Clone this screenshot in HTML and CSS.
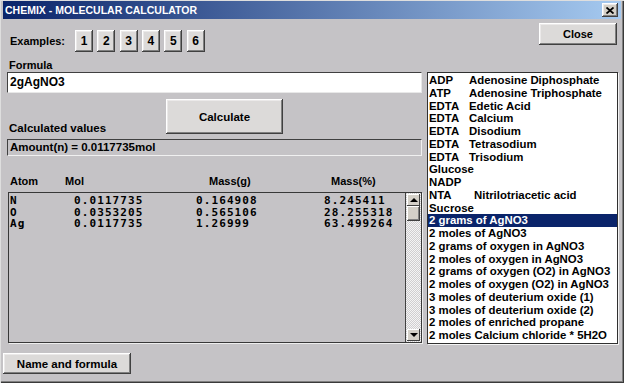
FILE: index.html
```html
<!DOCTYPE html>
<html lang="en">
<head>
  <meta charset="UTF-8" />
  <title>CHEMIX - Molecular Calculator</title>
  <link rel="stylesheet" href="styles.css">
</head>
<body>
  <div class="window">
    <div class="titlebar">
      <span class="title">CHEMIX - MOLECULAR CALCULATOR</span>
      <button class="btn title-close">
        <svg width="8" height="7" viewBox="0 0 8 7"><path d="M0.5 0.5 L7.5 6.5 M7.5 0.5 L0.5 6.5" stroke="#000" stroke-width="1.8" fill="none"/></svg>
      </button>
    </div>

    <div class="top">
      <div class="examples">
        <span>Examples:</span>
        <div class="ex-btns">
          <button class="btn ex-btn">1</button>
          <button class="btn ex-btn">2</button>
          <button class="btn ex-btn">3</button>
          <button class="btn ex-btn">4</button>
          <button class="btn ex-btn">5</button>
          <button class="btn ex-btn">6</button>
        </div>
      </div>
      <button class="btn close-btn">Close</button>
    </div>

    <div class="main">
      <!-- calculator side -->
      <div class="left">
        <div class="label">Formula</div>
        <div class="input">2gAgNO3</div>
        <div class="calc-row">
          <div class="label calc-label">Calculated values</div>
          <button class="btn calc-btn">Calculate</button>
        </div>
        <div class="amount">Amount(n) = 0.0117735mol</div>

        <div class="headers">
          <span>Atom</span>
          <span>Mol</span>
          <span>Mass(g)</span>
          <span>Mass(%)</span>
        </div>
        <div class="results">
          <div class="results-body">
            <div class="row"><span>N</span><span>0.0117735</span><span>0.164908</span><span>8.245411</span></div>
            <div class="row"><span>O</span><span>0.0353205</span><span>0.565106</span><span>28.255318</span></div>
            <div class="row"><span>Ag</span><span>0.0117735</span><span>1.26999</span><span>63.499264</span></div>
          </div>
          <div class="scrollbar">
            <div class="sb-btn"><span class="arrow-up"></span></div>
            <div class="sb-thumb"></div>
            <div class="sb-track"></div>
            <div class="sb-btn"><span class="arrow-down"></span></div>
          </div>
        </div>
      </div>

      <!-- examples list -->
      <ul class="list">
        <li><span class="code">ADP</span>Adenosine Diphosphate</li>
        <li><span class="code">ATP</span>Adenosine Triphosphate</li>
        <li><span class="code">EDTA</span>Edetic Acid</li>
        <li><span class="code">EDTA</span>Calcium</li>
        <li><span class="code">EDTA</span>Disodium</li>
        <li><span class="code">EDTA</span>Tetrasodium</li>
        <li><span class="code">EDTA</span>Trisodium</li>
        <li>Glucose</li>
        <li>NADP</li>
        <li><span class="code code-wide">NTA</span>Nitrilotriacetic acid</li>
        <li>Sucrose</li>
        <li class="selected">2 grams of AgNO3</li>
        <li>2 moles of AgNO3</li>
        <li>2 grams of oxygen in AgNO3</li>
        <li>2 moles of oxygen in AgNO3</li>
        <li>2 grams of oxygen (O2) in AgNO3</li>
        <li>2 moles of oxygen (O2) in AgNO3</li>
        <li>3 moles of deuterium oxide (1)</li>
        <li>3 moles of deuterium oxide (2)</li>
        <li>2 moles of enriched propane</li>
        <li>2 moles Calcium chloride * 5H2O</li>
      </ul>
    </div>

    <div class="footer">
      <button class="btn name-btn">Name and formula</button>
    </div>
  </div>
</body>
</html>
```

FILE: styles.css
```css
* {
  box-sizing: border-box;
}

body {
  margin: 0;
  background: #c5c3c6;
  color: #000;
  font-family: "Liberation Sans", Arial, sans-serif;
  font-weight: bold;
  font-size: 11px;
}

.window {
  width: 624px;
  height: 383px;
  padding: 1px 3px 3px;
  display: flex;
  flex-direction: column;
  background: #c5c3c6;
  box-shadow: inset 1px 1px #dedede, inset -1px -1px #3a3a3a, inset -2px -2px #808080;
}

.titlebar {
  height: 18px;
  display: flex;
  align-items: center;
  justify-content: space-between;
  padding: 0 3px 0 2px;
  background: linear-gradient(to right, #0a246a, #a6caf0);
}

.title {
  color: #fff;
  font-size: 10.5px;
}

.btn {
  font: inherit;
  color: inherit;
  padding: 0;
  border: 0;
  background: #dcdad9;
  box-shadow: inset -1px -1px #404040, inset 1px 1px #fff, inset -2px -2px #808080, inset 2px 2px #ebe9e9;
}

.title-close {
  width: 16px;
  height: 14px;
  display: flex;
  align-items: center;
  justify-content: center;
  background: #d4d0c8;
}

.top {
  height: 40px;
  display: flex;
  justify-content: space-between;
  align-items: flex-start;
  padding: 0 4px 0 7px;
}

.examples {
  display: flex;
  align-items: center;
  gap: 10px;
  margin-top: 11px;
}

.ex-btns {
  display: flex;
  gap: 4.3px;
}

.ex-btn {
  width: 18px;
  height: 22px;
  font-size: 12px;
}

.close-btn {
  width: 78px;
  height: 22px;
  margin-top: 4px;
}

.main {
  display: grid;
  grid-template-columns: 415px 191px;
  column-gap: 5px;
  align-items: start;
  padding-left: 4px;
}

.label {
  line-height: 13px;
  padding-left: 2px;
}

.input {
  height: 21px;
  padding-left: 2px;
  line-height: 19px;
  font-size: 12px;
  background: #fff;
  border: 1px solid;
  border-color: #404040 #e8e8e8 #e8e8e8 #404040;
}

.calc-row {
  height: 40px;
  margin-top: 6px;
  display: flex;
  align-items: flex-start;
}

.calc-label {
  width: 159px;
  align-self: flex-end;
  margin-bottom: 4px;
  font-size: 11.5px;
}

.calc-btn {
  width: 117px;
  height: 35px;
  font-size: 11.5px;
}

.amount {
  height: 17px;
  padding-left: 2px;
  line-height: 15px;
  font-size: 11.5px;
  border: 1px solid;
  border-color: #404040 #f0f0f0 #f0f0f0 #404040;
}

.headers {
  display: grid;
  grid-template-columns: 55px 144px 122px auto;
  margin-top: 19px;
  padding-left: 3px;
  line-height: 13px;
}

.results {
  width: 414px;
  height: 151px;
  margin: 4px 0 0 1px;
  display: flex;
  border: 1px solid #383838;
  box-shadow: 1px 1px 0 #eee;
}

.results-body {
  flex: 1;
  padding: 2px 0 0 1px;
  font-family: "DejaVu Sans Mono", "Liberation Mono", monospace;
  font-size: 11px;
  letter-spacing: 1.1px;
  line-height: 11.5px;
}

.row {
  display: grid;
  grid-template-columns: 64px 122px 128px auto;
}

.scrollbar {
  width: 16px;
  display: flex;
  flex-direction: column;
  padding: 1px;
  border-left: 1px solid #404040;
  background: repeating-conic-gradient(#f4f4f4 0 25%, #d0ced0 0 50%) 0 0 / 2px 2px;
}

.sb-btn {
  height: 12px;
  display: flex;
  align-items: center;
  justify-content: center;
  background: #d4d0c8;
  box-shadow: inset -1px -1px #404040, inset 1px 1px #fff;
}

.sb-thumb {
  height: 15px;
  background: #d4d0c8;
  box-shadow: inset -1px -1px #404040, inset 1px 1px #fff, inset -2px -2px #808080;
}

.sb-track {
  flex: 1;
}

.arrow-up,
.arrow-down {
  width: 0;
  height: 0;
  border-left: 4px solid transparent;
  border-right: 4px solid transparent;
}

.arrow-up {
  border-bottom: 4px solid #000;
}

.arrow-down {
  border-top: 4px solid #000;
}

.list {
  list-style: none;
  margin: 13px 0 0;
  padding: 1px 0 0;
  height: 272px;
  overflow: hidden;
  background: #fff;
  font-size: 11.4px;
  line-height: 12.75px;
  white-space: nowrap;
  border: 1px solid #303030;
  box-shadow: 1px 1px 0 #f4f4f4;
}

.list li {
  padding-left: 1px;
}

.list .selected {
  background: #0a246a;
  color: #fff;
}

.code {
  display: inline-block;
  width: 40px;
}

.code-wide {
  width: 45px;
}

.footer {
  margin-top: 9px;
}

.name-btn {
  width: 128px;
  height: 21px;
  font-size: 11.5px;
}
```
